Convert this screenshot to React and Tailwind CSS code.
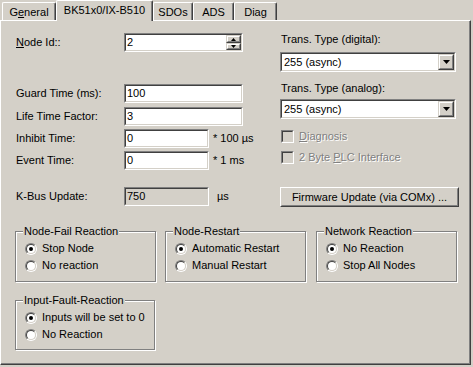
import React from "react";

// Win classic 3D frames
const Sunken = ({ className = "", disabled = false, children }) => (
  <div
    className={`shrink-0 border border-t-[#808080] border-l-[#808080] border-b-white border-r-white ${className}`}
  >
    <div
      className={`flex h-full w-full items-center border border-t-[#404040] border-l-[#404040] border-b-[#d4d0c8] border-r-[#d4d0c8] ${
        disabled ? "bg-[#d4d0c8]" : "bg-white"
      }`}
    >
      {children}
    </div>
  </div>
);

const Raised = ({ className = "", button = false, children }) => (
  <div
    className={`shrink-0 border border-b-[#404040] border-r-[#404040] bg-[#d4d0c8] ${
      button ? "border-t-white border-l-white" : "border-t-[#d4d0c8] border-l-[#d4d0c8]"
    } ${className}`}
  >
    <div
      className={`flex h-full w-full items-center justify-center border border-b-[#808080] border-r-[#808080] ${
        button ? "border-t-[#d4d0c8] border-l-[#d4d0c8]" : "border-t-white border-l-white"
      }`}
    >
      {children}
    </div>
  </div>
);

const Arrow = ({ up = false, w = 7, h = 4 }) => (
  <svg width={w} height={h} viewBox={`0 0 ${w} ${h}`} className="block">
    {up ? (
      <polygon points={`0,${h} ${w},${h} ${w / 2},0`} fill="#000" />
    ) : (
      <polygon points={`0,0 ${w},0 ${w / 2},${h}`} fill="#000" />
    )}
  </svg>
);

const Field = ({ label, mt, width = "w-[119px]", value, suffix, suffixMl = "ml-[4px]", disabled }) => (
  <div className={`flex h-[19px] items-center ${mt}`}>
    <span className="w-[108px] shrink-0">{label}</span>
    <Sunken className={`h-[19px] ${width}`} disabled={disabled}>
      <span className="pl-[1px]">{value}</span>
    </Sunken>
    {suffix && <span className={`shrink-0 whitespace-nowrap ${suffixMl}`}>{suffix}</span>}
  </div>
);

const Combo = ({ value }) => (
  <Sunken className="h-[20px] w-[176px]">
    <span className="flex-1 pl-[2px]">{value}</span>
    <Raised className="h-[16px] w-[16px]">
      <Arrow />
    </Raised>
  </Sunken>
);

const DisabledCheck = ({ children, mt }) => (
  <div className={`flex h-[13px] items-center ${mt}`}>
    <Sunken className="ml-[1px] h-[13px] w-[13px]" disabled />
    <span className="ml-[5px] text-[#808080] [text-shadow:1px_1px_0_#fff]">{children}</span>
  </div>
);

const Radio = ({ checked, label }) => (
  <div className="flex h-[17px] items-center">
    <div className="h-[12px] w-[12px] rounded-full border border-t-[#808080] border-l-[#808080] border-b-white border-r-white">
      <div className="flex h-full w-full items-center justify-center rounded-full border border-t-[#404040] border-l-[#404040] border-b-[#d4d0c8] border-r-[#d4d0c8] bg-white">
        {checked && <div className="h-[4px] w-[4px] rounded-full bg-black" />}
      </div>
    </div>
    <span className="ml-[5px]">{label}</span>
  </div>
);

const Group = ({ title, className = "", children }) => (
  <div
    className={`relative border border-[#808080] shadow-[inset_1px_1px_0_#fff,1px_1px_0_#fff] ${className}`}
  >
    <span className="absolute -top-[7px] left-[7px] bg-[#d4d0c8] px-[1px] leading-[13px]">{title}</span>
    <div className="flex flex-col pl-[9px] pt-[8px]">{children}</div>
  </div>
);

const Tab = ({ children, width }) => (
  <div
    className={`flex h-[18px] items-center justify-center rounded-t-[2px] border-l border-r border-t border-l-white border-t-white border-r-[#404040] pt-[1px] shadow-[inset_-1px_0_0_#808080] ${width}`}
  >
    {children}
  </div>
);

export default function App() {
  return (
    <div className="h-[367px] w-[473px] overflow-hidden bg-[#d4d0c8] font-['Liberation_Sans',Arial,sans-serif] text-[11px] leading-[13px] text-black">
      {/* Tabs */}
      <div className="flex h-[20px] items-end pl-[2px]">
        <Tab width="w-[54px]">
          <span>
            G<span className="underline">e</span>neral
          </span>
        </Tab>
        <div className="relative z-10 -mb-[1px] flex h-[21px] w-[97px] items-center justify-center rounded-t-[2px] border-l border-r border-t border-l-white border-t-white border-r-[#404040] bg-[#d4d0c8] pb-[2px] shadow-[inset_-1px_0_0_#808080]">
          BK51x0/IX-B510
        </div>
        <Tab width="w-[40px]">SDOs</Tab>
        <Tab width="w-[41px]">ADS</Tab>
        <Tab width="w-[43px]">Diag</Tab>
      </div>

      {/* Panel */}
      <div className="h-[345px] w-[471px] border border-l-white border-t-white border-b-[#404040] border-r-[#404040] shadow-[inset_-1px_-1px_0_#808080]">
        <div className="flex items-start">
          {/* Left column */}
          <div className="ml-[15px] flex w-[227px] shrink-0 flex-col">
            <div className="mt-[12px] flex h-[19px] items-center">
              <span className="w-[108px] shrink-0">
                <span className="underline">N</span>ode Id::
              </span>
              <Sunken className="h-[19px] w-[119px]">
                <span className="flex-1 pl-[1px]">2</span>
                <div className="flex flex-col">
                  <Raised className="h-[8px] w-[15px]">
                    <Arrow up w={5} h={3} />
                  </Raised>
                  <Raised className="h-[7px] w-[15px]">
                    <Arrow w={5} h={3} />
                  </Raised>
                </div>
              </Sunken>
            </div>
            <Field label="Guard Time (ms):" mt="mt-[32px]" value="100" />
            <Field label="Life Time Factor:" mt="mt-[4px]" value="3" />
            <Field label="Inhibit Time:" mt="mt-[3px]" width="w-[85px]" value="0" suffix="* 100 µs" />
            <Field label="Event Time:" mt="mt-[3px]" width="w-[85px]" value="0" suffix="* 1 ms" />
            <Field
              label="K-Bus Update:"
              mt="mt-[17px]"
              width="w-[85px]"
              value="750"
              suffix="µs"
              suffixMl="ml-[8px]"
              disabled
            />
          </div>

          {/* Right column */}
          <div className="ml-[37px] flex flex-col">
            <span className="mt-[12px] pl-[1px]">Trans. Type (digital):</span>
            <div className="mt-[6px]">
              <Combo value="255 (async)" />
            </div>
            <span className="mt-[10px] pl-[1px]">Trans. Type (analog):</span>
            <div className="mt-[4px]">
              <Combo value="255 (async)" />
            </div>
            <DisabledCheck mt="mt-[11px]">
              <span className="underline">D</span>iagnosis
            </DisabledCheck>
            <DisabledCheck mt="mt-[8px]">
              2 Byte <span className="underline">P</span>LC Interface
            </DisabledCheck>
            <Raised button className="mt-[23px] h-[20px] w-[179px]">
              <span>Firmware Update (via COMx) ...</span>
            </Raised>
          </div>
        </div>

        {/* Group boxes */}
        <div className="ml-[14px] mt-[24px] flex">
          <Group title="Node-Fail Reaction" className="h-[51px] w-[141px]">
            <Radio checked label="Stop Node" />
            <Radio label="No reaction" />
          </Group>
          <Group title="Node-Restart" className="ml-[9px] h-[51px] w-[141px]">
            <Radio checked label="Automatic Restart" />
            <Radio label="Manual Restart" />
          </Group>
          <Group title="Network Reaction" className="ml-[10px] h-[51px] w-[141px]">
            <Radio checked label="No Reaction" />
            <Radio label="Stop All Nodes" />
          </Group>
        </div>
        <div className="ml-[14px] mt-[18px] flex">
          <Group title="Input-Fault-Reaction" className="h-[50px] w-[140px]">
            <Radio checked label="Inputs will be set to 0" />
            <Radio label="No Reaction" />
          </Group>
        </div>
      </div>
    </div>
  );
}
